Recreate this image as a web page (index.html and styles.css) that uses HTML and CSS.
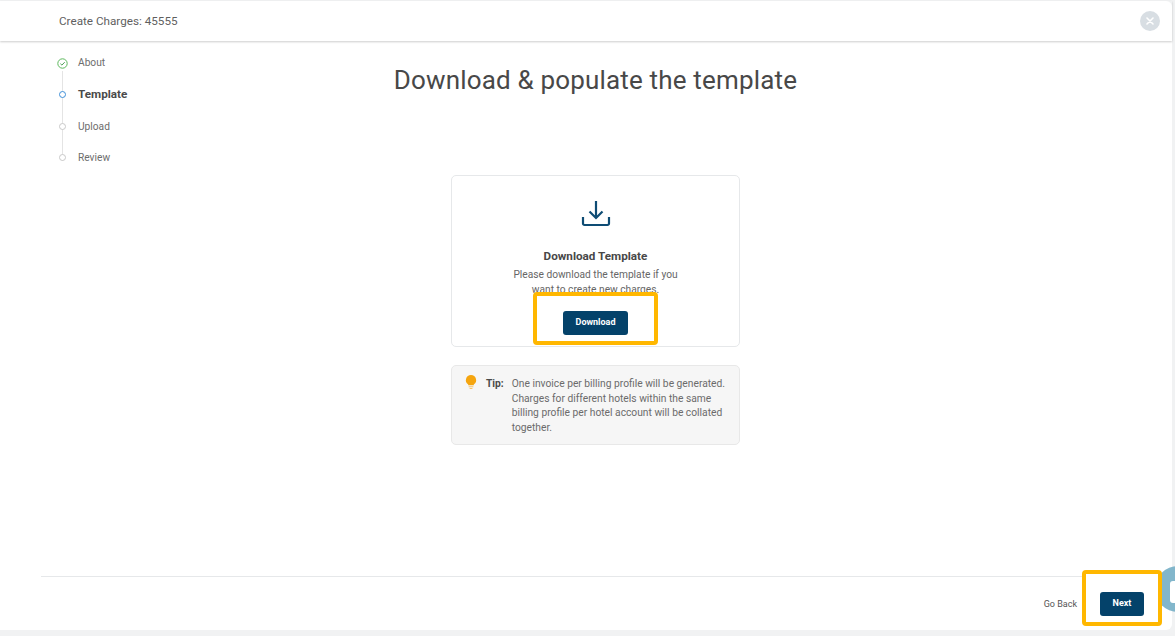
FILE: index.html
```html
<!DOCTYPE html>
<html lang="en">
<head>
    <meta charset="UTF-8">
    <title>Create Charges</title>
    <link rel="stylesheet" href="styles.css">
</head>
<body>
    <div class="modal">
        <header class="modal-header">
            <span class="modal-title">Create Charges: 45555</span>
            <span class="close-button">
                <svg width="8" height="8" viewBox="0 0 8 8"><path d="M1 1l6 6M7 1l-6 6" stroke="#fff" stroke-width="1.6" stroke-linecap="round"/></svg>
            </span>
        </header>
        <div class="modal-content">
            <ul class="steps">
                <li class="step step-about">
                    <svg class="step-check" width="11" height="11" viewBox="0 0 11 11"><circle cx="5.5" cy="5.5" r="4.7" fill="none" stroke="#5cb85c" stroke-width="1"/><path d="M3.4 5.7l1.5 1.4 2.8-2.9" fill="none" stroke="#4a9e55" stroke-width="1"/></svg>
                    About
                </li>
                <li class="step step-active"><span class="dot dot-blue"></span>Template</li>
                <li class="step step-upload"><span class="dot"></span>Upload</li>
                <li class="step step-review"><span class="dot"></span>Review</li>
            </ul>
            <main class="main">
                <h1 class="main-title">Download &amp; populate the template</h1>
                <section class="card">
                    <svg class="download-icon" width="30" height="28" viewBox="0 0 30 28"><path d="M15 1v17M8.500 11.500l6.500 6.500 6.500-6.500M2 17v6.500a1.500 1.500 0 0 0 1.500 1.500h23a1.500 1.500 0 0 0 1.500-1.500v-6.500" fill="none" stroke="#0e4c74" stroke-width="2.200"/></svg>
                    <h2 class="card-title">Download Template</h2>
                    <p class="card-text">Please download the template if you want to create new charges.</p>
                    <div class="highlight-wrap">
                        <button class="btn">Download</button>
                        <span class="highlight highlight-download"></span>
                    </div>
                </section>
                <section class="tip">
                    <svg class="tip-icon" width="12" height="14" viewBox="0 0 12 15"><path d="M6 0a5.500 5.500 0 0 0-3 10.100V11h6v-.9A5.500 5.500 0 0 0 6 0z" fill="#f5a50f"/><path d="M3.500 12h5v1h-5zM4.500 14h3v1h-3z" fill="#f8c468"/></svg>
                    <b class="tip-label">Tip:</b>
                    <p class="tip-text">One invoice per billing profile will be generated. Charges for different hotels within the same billing profile per hotel account will be collated together.</p>
                </section>
            </main>
        </div>
        <footer class="modal-footer">
            <a class="go-back">Go Back</a>
            <div class="highlight-wrap">
                <button class="btn btn-next">Next</button>
                <span class="highlight highlight-next"></span>
            </div>
        </footer>
    </div>
    <div class="chat-bubble"><span class="chat-inner"></span></div>
</body>
</html>
```

FILE: styles.css
```css
html, body {
    height: 100%;
}
body {
    margin: 0;
    overflow: hidden;
    background-color: #f1f2f3;
    font-family: Roboto, "Liberation Sans", sans-serif;
    color: #6b6b6b;
}
.modal {
    display: flex;
    flex-direction: column;
    width: 1172px;
    height: 629px;
    margin-top: 1px;
    background-color: #fff;
    border-radius: 0 6px 6px 0;
}
.modal-header {
    display: flex;
    align-items: center;
    justify-content: space-between;
    height: 40px;
    padding: 0 12px 0 59px;
    box-shadow: 0 1px 2px rgba(0, 0, 0, 0.2);
}
.modal-title {
    font-size: 11.7px;
    color: #5f5f5f;
}
.close-button {
    display: flex;
    align-items: center;
    justify-content: center;
    width: 20px;
    height: 20px;
    border-radius: 50%;
    background-color: #d8dee3;
}
.modal-content {
    flex: 1;
    display: grid;
    grid-template-columns: 130px 1fr 130px;
    padding: 0 23px 0 42px;
}

/* steps */
.steps {
    position: relative;
    list-style: none;
    margin: 0;
    padding: 13px 0 0 15px;
    font-size: 10.2px;
}
.steps::before {
    content: "";
    position: absolute;
    left: 20px;
    top: 30px;
    height: 90px;
    width: 1px;
    background-color: #e4e4e4;
}
.step {
    position: relative;
    display: flex;
    align-items: center;
    gap: 10px;
    height: 16px;
    color: #6d6d6d;
}
.step-active {
    margin-top: 16px;
    font-weight: 700;
    font-size: 11.7px;
    color: #4a4a4a;
}
.step-upload {
    margin-top: 16px;
}
.step-review {
    margin-top: 15px;
}
.step-check {
    background-color: #fff;
    margin-top: 2px;
}
.dot {
    width: 5px;
    height: 5px;
    margin-left: 2px;
    margin-right: 2px;
    border: 1px solid #c9c9c9;
    border-radius: 50%;
    background-color: #fff;
}
.dot-blue {
    border-color: #3f8fd8;
}

/* main column */
.main {
    display: flex;
    flex-direction: column;
    align-items: center;
}
.main-title {
    margin: 24px 0 0;
    font-size: 26px;
    line-height: 30px;
    font-weight: 400;
    letter-spacing: 0.17px;
    color: #484848;
}
.card {
    display: flex;
    flex-direction: column;
    align-items: center;
    box-sizing: border-box;
    width: 289px;
    height: 172px;
    margin-top: 80px;
    padding-top: 24px;
    border: 1px solid #e6e8ea;
    border-radius: 5px;
}
.card-title {
    margin: 20px 0 0;
    font-size: 11.7px;
    line-height: 16px;
    font-weight: 700;
    color: #484848;
}
.card-text {
    width: 172px;
    margin: 3px 0 0;
    font-size: 10.2px;
    line-height: 15px;
    text-align: center;
    color: #666;
}
.highlight-wrap {
    position: relative;
}
.card .highlight-wrap {
    margin-top: 14px;
}
.btn {
    position: relative;
    z-index: 3;
    display: block;
    width: 65px;
    height: 24px;
    padding: 0 0 2px;
    border: none;
    border-radius: 3px;
    background-color: #04426a;
    color: #fff;
    font-family: inherit;
    font-size: 9px;
    font-weight: 700;
}
.btn-next {
    width: 44px;
}
/* yellow annotation boxes, white inside, they hide what is under them */
.highlight {
    position: absolute;
    z-index: 2;
    border: 4px solid #ffb700;
    border-radius: 4px;
    background-color: #fff;
}
.highlight-download {
    left: -30px;
    top: -19px;
    width: 117px;
    height: 45px;
}
.highlight-next {
    left: -18px;
    top: -22px;
    width: 72px;
    height: 48px;
}

/* tip */
.tip {
    display: flex;
    box-sizing: border-box;
    width: 289px;
    height: 80px;
    margin-top: 18px;
    padding: 11px 13px 0 13px;
    border: 1px solid #e8e8e8;
    border-radius: 5px;
    background-color: #f6f6f6;
    font-size: 10.25px;
    line-height: 14.500px;
}
.tip-icon {
    flex: none;
    margin-top: -2px;
}
.tip-label {
    margin-left: 9px;
    color: #4a4a4a;
}
.tip-text {
    margin: 0 0 0 8px;
    color: #6b6b6b;
}

/* footer */
.modal-footer {
    display: flex;
    align-items: center;
    justify-content: flex-end;
    gap: 23px;
    height: 53px;
    margin-left: 41px;
    padding-right: 8px;
    margin-right: 20px;
    border-top: 1px solid #e6e8ea;
}
.go-back {
    font-size: 9px;
    color: #555;
}
.chat-bubble {
    position: absolute;
    left: 1155px;
    top: 566px;
    width: 46px;
    height: 46px;
    border-radius: 50%;
    background-color: #82b6cb;
}
.chat-inner {
    position: absolute;
    left: 15px;
    top: 15px;
    width: 14px;
    height: 22px;
    border-radius: 3px;
    background-color: #fff;
}
```
